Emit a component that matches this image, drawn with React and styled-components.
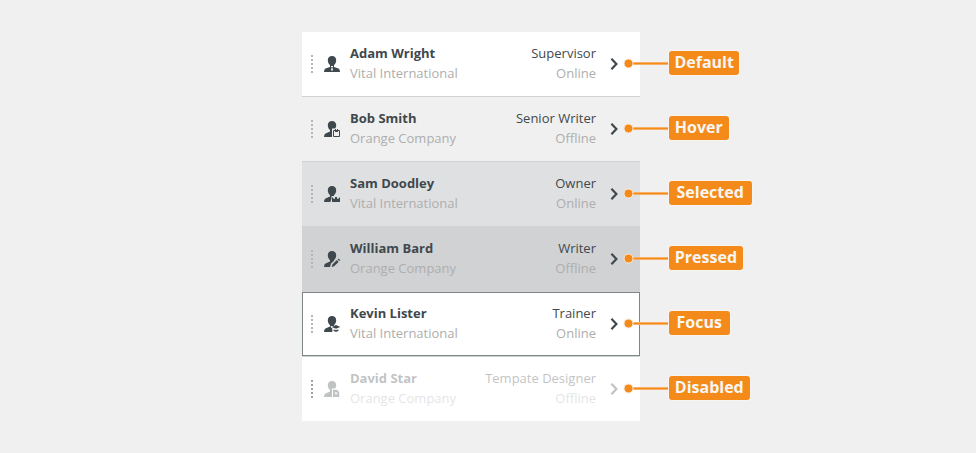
import React from "react"
import styled, { createGlobalStyle } from "styled-components"

const colors = {
  page: "#f0f0f0",
  line: "#d1d2d4",
  dark: "#3f484c",
  muted: "#aeaeae",
  orange: "#f48a1a",
}

const people = [
  { name: "Adam Wright", company: "Vital International", role: "Supervisor", status: "Online", icon: "tie", state: "Default", tag: 70, inset: 5.4 },
  { name: "Bob Smith", company: "Orange Company", role: "Senior Writer", status: "Offline", icon: "clipboard", state: "Hover", tag: 60, inset: 5.8 },
  { name: "Sam Doodley", company: "Vital International", role: "Owner", status: "Online", icon: "crown", state: "Selected", tag: 83, inset: 7.5 },
  { name: "William Bard", company: "Orange Company", role: "Writer", status: "Offline", icon: "pencil", state: "Pressed", tag: 74, inset: 5.8 },
  { name: "Kevin Lister", company: "Vital International", role: "Trainer", status: "Online", icon: "cap", state: "Focus", tag: 61, inset: 7.5 },
  { name: "David Star", company: "Orange Company", role: "Tempate Designer", status: "Offline", icon: "page", state: "Disabled", tag: 81, inset: 5.8 },
]

const head = "M8 0C10.7 0 12.2 1.7 12.2 4.2C12.2 6.4 11.3 8 10 9V10H6V9C4.7 8 3.8 6.4 3.8 4.2C3.8 1.7 5.3 0 8 0Z"
const headCut = "M8 0C10.7 0 12.2 1.7 12.2 4.2C12.2 5.7 11.7 6.8 11 7.6H8V11H6V9C4.7 8 3.8 6.4 3.8 4.2C3.8 1.7 5.3 0 8 0Z"

function PersonIcon({ type }) {
  const cut = type === "clipboard" || type === "page"
  return (
    <IconSvg viewBox="0 0 16 16" aria-hidden="true">
      <path d={cut ? headCut : head} />
      {type === "tie" && (
        <>
          <path d="M6 9.5H10V11L14.5 12.6Q16 13.3 16 16H0Q0 13.3 1.5 12.6L6 11Z" />
          <path d="M7 10H9V11.2H7ZM7.5 12H8.5L9 14.5H7Z" fill="#fff" />
        </>
      )}
      {type === "clipboard" && (
        <>
          <path d="M6 9H8V16H0Q0 13.3 1.5 12.6L6 10.6Z" />
          <path d="M9.5 9.5H15.5V15.5H9.5Z" fill="none" stroke="currentColor" />
          <path d="M11 8H14V11H11Z" />
          <path d="M12 8H13V9H12Z" fill={colors.page} />
        </>
      )}
      {type === "crown" && (
        <>
          <path d="M6 9H9.5L7.4 10.4V13L6.4 16H0Q0 13.3 1.5 12.6L6 10.6Z" />
          <path d="M8 11L10 13L11 12.4V11H13V12.4L14 13L16 11V16H8Z" />
        </>
      )}
      {type === "pencil" && (
        <>
          <path d="M6 9H10V9.8L7 12.6L6 16H0Q0 13.3 1.5 12.6L6 10.6Z" />
          <path d="M7.6 16L8.4 13.5L12.8 9.1L14.6 10.9L10.1 15.3ZM13.6 8.4L14.5 7.5L16.3 9.2L15.4 10.1Z" />
        </>
      )}
      {type === "cap" && (
        <>
          <path d="M6 9H9L6.3 10.8L8.3 12.4V16H0Q0 13.3 1.5 12.6L6 10.6Z" />
          <path d="M12 9L16.3 10.9L12 12.8L7.7 10.9Z" />
          <path d="M9.5 13.4L12 14L14.5 13.4V14.8Q12 16.6 9.5 14.8Z" />
        </>
      )}
      {type === "page" && (
        <>
          <path d="M6 9H8V16H0Q0 13.3 1.5 12.6L6 10.6Z" />
          <path d="M9 8.8H13L15.2 11V16H9Z" />
          <path d="M10.9 11H12.8L13.4 12V13.4H10.9Z" fill="#fff" fillOpacity="0.7" />
        </>
      )}
    </IconSvg>
  )
}

export default function App() {
  return (
    <>
      <GlobalStyle />
      <Page>
        {people.map(person => (
          <Line key={person.name}>
            <Row $state={person.state}>
              <Handle $strong={person.state === "Disabled"}>
                {[0, 1, 2, 3, 4].map(dot => (
                  <i key={dot} />
                ))}
              </Handle>
              <Content $disabled={person.state === "Disabled"}>
                <PersonIcon type={person.icon} />
                <Column>
                  <Name>{person.name}</Name>
                  <Detail>{person.company}</Detail>
                </Column>
                <Column $right>
                  <Role>{person.role}</Role>
                  <Detail>{person.status}</Detail>
                </Column>
                <Chevron viewBox="0 0 8 12" aria-hidden="true">
                  <path d="M1.4 0.8L6.4 6L1.4 11.2" />
                </Chevron>
              </Content>
            </Row>
            <Callout>
              <Pointer viewBox="0 0 46 12" aria-hidden="true">
                <path d="M9 5.5H46" stroke="#fbd9b2" strokeWidth="3" />
                <path d="M9 5.5H46" stroke={colors.orange} strokeWidth="2" />
                <circle cx="5.5" cy="5.5" r="4.5" fill={colors.orange} stroke="#f6eee5" />
              </Pointer>
              <Tag $width={person.tag} $inset={person.inset}>
                {person.state}
              </Tag>
            </Callout>
          </Line>
        ))}
      </Page>
    </>
  )
}

const GlobalStyle = createGlobalStyle`
  * {
    box-sizing: border-box;
  }
  body {
    margin: 0;
    background: ${colors.page};
    font-family: "Open Sans", sans-serif;
  }
`

const Page = styled.main`
  width: 976px;
  height: 453px;
  padding: 32px 0 0 302px;
  background: ${colors.page};
`

const Line = styled.div`
  display: flex;
  height: 65px;
`

const backgrounds = {
  Hover: colors.page,
  Selected: "#dfe0e2",
  Pressed: "#d1d2d4",
}

const Row = styled.div`
  width: 338px;
  height: ${props => (props.$state === "Disabled" ? 64 : 65)}px;
  padding-left: 9px;
  display: flex;
  background: ${props => backgrounds[props.$state] || "#fff"};
  border-bottom: ${props => (props.$state === "Disabled" ? "none" : `1px solid ${colors.line}`)};
  box-shadow: ${props => (props.$state === "Focus" ? "inset 0 0 0 1px #7f8688" : "none")};
`

const Handle = styled.div`
  display: flex;
  flex-direction: column;
  gap: 2px;
  margin: 23px 11px 0 0;
  i {
    width: 2px;
    height: 2px;
    background: ${props => (props.$strong ? "#a0a0a0" : "#b5b5b5")};
  }
`

const Content = styled.div`
  flex: 1;
  display: flex;
  opacity: ${props => (props.$disabled ? 0.32 : 1)};
`

const IconSvg = styled.svg`
  width: 16px;
  height: 16px;
  margin: 24px 10px 0 0;
  overflow: visible;
  color: ${colors.dark};
  fill: currentColor;
`

const Column = styled.div`
  flex: ${props => (props.$right ? "none" : 1)};
  padding-top: 11px;
  font-size: 13px;
  line-height: 20px;
  white-space: nowrap;
  text-align: ${props => (props.$right ? "right" : "left")};
`

const Name = styled.div`
  font-weight: 700;
  color: ${colors.dark};
`

const Role = styled.div`
  color: ${colors.dark};
`

const Detail = styled.div`
  color: ${colors.muted};
`

const Chevron = styled.svg`
  width: 8px;
  height: 12px;
  margin: 26px 22px 0 14px;
  overflow: visible;
  fill: none;
  stroke: ${colors.dark};
  stroke-width: 2.2;
`

/* the pointer dot starts inside the row, so it is pulled back over it */
const Callout = styled.div`
  display: flex;
  position: relative;
  margin-left: -17px;
`

const Pointer = styled.svg`
  width: 46px;
  height: 12px;
  margin-top: 26px;
`

const Tag = styled.div`
  width: ${props => props.$width}px;
  height: 24px;
  margin-top: 19px;
  padding-left: ${props => props.$inset}px;
  border-radius: 3px;
  background: ${colors.orange};
  box-shadow: 0 0 0 1px #f8f4ef;
  color: #f8f6f3;
  font-size: 16px;
  font-weight: 700;
  line-height: 22px;
`
